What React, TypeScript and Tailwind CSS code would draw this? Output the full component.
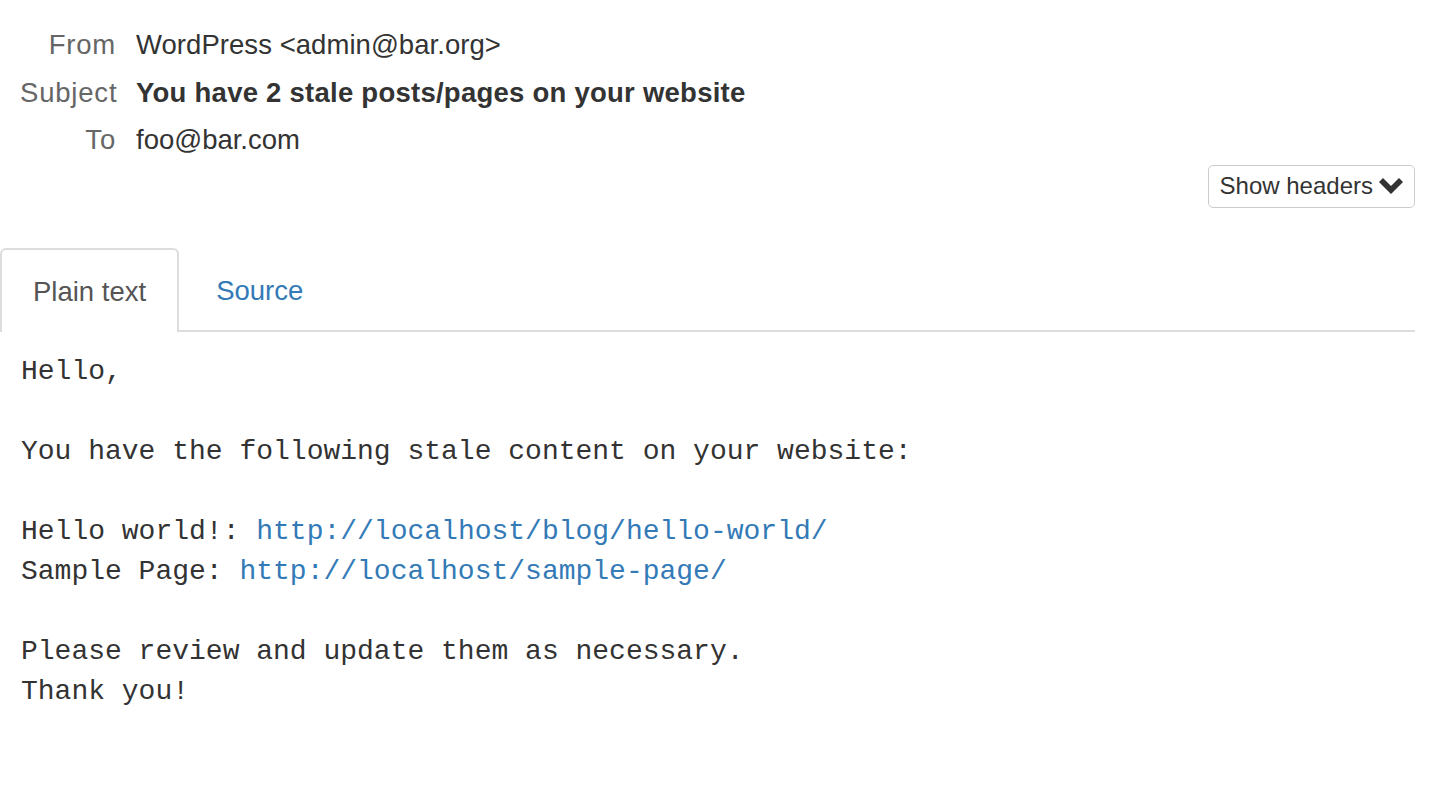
import React from "react";

export default function App() {
  const sans = { fontFamily: '"Liberation Sans", Arial, sans-serif' };
  const mono = { fontFamily: '"Liberation Mono", "Courier New", monospace' };
  return (
    <div className="w-[1442px] h-[802px] bg-white overflow-hidden text-[#333]" style={sans}>
      <div className="pt-[21px] pl-[20px]">
        <div className="flex items-center h-[47.5px]">
          <div className="w-[96px] text-right text-[27.5px] tracking-[0.8px] text-[#666]">From</div>
          <div className="ml-[20px] text-[27.5px] tracking-[0.05px] text-[#333]">WordPress &lt;admin@bar.org&gt;</div>
        </div>
        <div className="flex items-center h-[47.5px]">
          <div className="w-[96px] text-right text-[27.5px] tracking-[0.8px] text-[#666]">Subject</div>
          <div className="ml-[20px] text-[27.5px] tracking-[0.25px] font-bold text-[#333]">You have 2 stale posts/pages on your website</div>
        </div>
        <div className="flex items-center h-[47.5px]">
          <div className="w-[96px] text-right text-[27.5px] tracking-[0.8px] text-[#666]">To</div>
          <div className="ml-[20px] text-[27.5px] text-[#333]">foo@bar.com</div>
        </div>
      </div>
      <div className="flex justify-end pr-[27px] mt-[1px]">
        <button className="h-[43px] flex items-center border border-[#ccc] rounded-[5px] bg-white pl-[11px] pr-[11px] text-[24px] text-[#333]">
          <span>Show headers</span>
          <svg width="24" height="17" viewBox="0 0 24 17" className="ml-[6px]">
            <path d="M0 4 L4 0 L12 8 L20 0 L24 4 L12 16 Z" fill="#333" />
          </svg>
        </button>
      </div>
      <div className="mt-[40px] mr-[27px] flex items-end border-b-2 border-[#ddd] h-[84px]">
        <div className="h-[84px] -mb-[2px] bg-white border-2 border-b-0 border-[#ddd] rounded-t-[6px] px-[31px] flex items-center pt-[2px] text-[27.5px] text-[#555]">
          Plain text
        </div>
        <div className="h-[84px] -mb-[2px] ml-[2px] px-[35px] flex items-center pt-[2px] text-[27.5px] text-[#337ab7]">
          Source
        </div>
      </div>
      <pre
        className="pt-[20px] pl-[21px] text-[28px] leading-[40px] text-[#333] whitespace-pre"
        style={mono}
      >
{`Hello,

You have the following stale content on your website:

`}Hello world!: <span className="text-[#337ab7]">http://localhost/blog/hello-world/</span>
{`
`}Sample Page: <span className="text-[#337ab7]">http://localhost/sample-page/</span>
{`

Please review and update them as necessary.
Thank you!`}
      </pre>
    </div>
  );
}
